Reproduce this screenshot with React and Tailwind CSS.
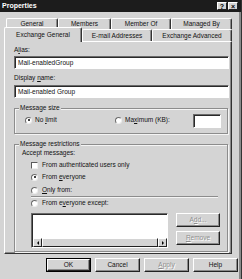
import React from 'react';

function TitleBtn({ children }) {
  return (
    <span className="w-[10px] h-[8px] bg-[#d4d4d4] border border-t-white border-l-white border-b-[#222] border-r-[#222] flex items-center justify-center text-black font-bold text-[7px] leading-none">
      {children}
    </span>
  );
}

function Tab({ w, children }) {
  return (
    <div
      className="h-full border-t border-l border-r border-t-white border-l-white border-r-[#333] rounded-t-[2px] flex items-center justify-center shadow-[inset_-1px_0_0_#8a8a8a]"
      style={{ width: w }}
    >
      {children}
    </div>
  );
}

function Radio({ checked }) {
  return (
    <span className="w-[7px] h-[7px] rounded-full bg-white border border-t-[#6a6a6a] border-l-[#6a6a6a] border-b-[#eee] border-r-[#eee] flex items-center justify-center shrink-0">
      {checked && <span className="w-[2px] h-[2px] rounded-full bg-black" />}
    </span>
  );
}

function Check() {
  return (
    <span className="w-[7px] h-[7px] bg-white border border-t-[#5a5a5a] border-l-[#5a5a5a] border-b-[#eee] border-r-[#eee] shrink-0" />
  );
}

function Field({ value }) {
  return (
    <div className="w-[215px] h-[13px] bg-white border border-t-[#6a6a6a] border-l-[#6a6a6a] border-b-white border-r-white shadow-[inset_1px_1px_0_#2a2a2a] flex items-center pl-[3px]">
      {value}
    </div>
  );
}

function Btn({ children, disabled, def, w = 45 }) {
  const inner = (
    <div
      className={`h-full bg-[#d4d4d4] border border-t-white border-l-white border-b-[#222] border-r-[#222] shadow-[inset_-1px_-1px_0_#8a8a8a] flex items-center justify-center ${disabled ? 'text-[#8e8e8e] [text-shadow:1px_1px_0_#fff]' : 'text-[#111]'}`}
    >
      {children}
    </div>
  );
  if (def) {
    return (
      <div className="h-[14px] border border-black" style={{ width: w }}>
        {inner}
      </div>
    );
  }
  return (
    <div className="h-[14px]" style={{ width: w }}>
      {inner}
    </div>
  );
}

const U = ({ children }) => <span className="underline underline-offset-[1px]">{children}</span>;

export default function App() {
  return (
    <div className="w-[242px] h-[279px] bg-[#d4d4d4] font-['Liberation_Sans',Arial,sans-serif] text-[6.5px] leading-[8px] text-[#111] overflow-hidden border-r border-r-[#333] shadow-[inset_-2px_0_0_#8a8a8a]">
      {/* title bar */}
      <div className="h-[12px] bg-[#1c1c1c] flex items-center justify-between pl-[2px] pr-[3px]">
        <span className="text-white font-bold text-[7px]">Properties</span>
        <div className="flex gap-[1px]">
          <TitleBtn>?</TitleBtn>
          <TitleBtn>×</TitleBtn>
        </div>
      </div>

      {/* tabs */}
      <div className="mt-[6px]">
        <div className="flex h-[11px] pl-[6px]">
          <Tab w={52}>General</Tab>
          <Tab w={53}>Members</Tab>
          <Tab w={60}>Member Of</Tab>
          <Tab w={61}>Managed By</Tab>
        </div>
        <div className="flex h-[12px] pl-[4px] items-end">
          <div className="relative z-10 w-[78px] h-[15px] -mb-[1px] bg-[#d4d4d4] border-t border-l border-r border-t-white border-l-white border-r-[#333] rounded-t-[2px] flex items-start justify-center pt-[3px] shadow-[inset_-1px_0_0_#8a8a8a]">
            Exchange General
          </div>
          <Tab w={70}>E-mail Addresses</Tab>
          <Tab w={80}>Exchange Advanced</Tab>
        </div>
      </div>

      {/* panel */}
      <div className="ml-[4px] w-[228px] h-[213px] border border-t-white border-l-white border-r-[#333] border-b-[#333] shadow-[inset_-1px_-1px_0_#8a8a8a] pl-[9px] pt-[4px]">
        <div className="h-[8px]">
          A<U>l</U>ias:
        </div>
        <div className="mt-[2px]">
          <Field value="Mail-enabledGroup" />
        </div>
        <div className="h-[8px] mt-[5px]">
          Display <U>n</U>ame:
        </div>
        <div className="mt-[3px]">
          <Field value="Mail-enabled Group" />
        </div>

        {/* message size */}
        <div className="relative mt-[10px] w-[214px] h-[26px] border border-[#8c8c8c] shadow-[inset_1px_1px_0_#f4f4f4,1px_1px_0_#f4f4f4] pt-[5px] pl-[10px]">
          <span className="absolute -top-[5px] left-[4px] bg-[#d4d4d4] px-[1px]">Message size</span>
          <div className="flex h-[14px]">
            <div className="flex items-center gap-[3px] h-[8px] mt-[2px] w-[90px]">
              <Radio checked />
              <span>
                No <U>l</U>imit
              </span>
            </div>
            <div className="flex items-center gap-[3px] h-[8px] mt-[2px] w-[78px]">
              <Radio />
              <span>
                Ma<U>x</U>imum (KB):
              </span>
            </div>
            <div className="w-[28px] h-[14px] bg-white border border-t-[#6a6a6a] border-l-[#6a6a6a] border-b-white border-r-white shadow-[inset_1px_1px_0_#2a2a2a]" />
          </div>
        </div>

        {/* message restrictions */}
        <div className="relative mt-[10px] w-[214px] h-[108px] border border-[#8c8c8c] shadow-[inset_1px_1px_0_#f4f4f4,1px_1px_0_#f4f4f4] pt-[4px]">
          <span className="absolute -top-[5px] left-[4px] bg-[#d4d4d4] px-[1px]">Message restrictions</span>
          <div className="h-[8px] pl-[7px]">Accept messages:</div>
          <div className="pl-[16px]">
            <div className="flex items-center gap-[4px] h-[8px] mt-[4px]">
              <Check />
              <span>From authenticated users only</span>
            </div>
            <div className="flex items-center gap-[4px] h-[8px] mt-[4px]">
              <Radio checked />
              <span>
                From <U>e</U>veryone
              </span>
            </div>
            <div className="flex items-center gap-[4px] h-[8px] mt-[5px]">
              <Radio />
              <span>
                <U>O</U>nly from:
              </span>
            </div>
            <div className="mt-[2px] w-[187px] h-[2px] border-t border-t-[#8c8c8c] border-b border-b-[#f4f4f4]" />
            <div className="flex items-center gap-[4px] h-[8px] mt-[1px]">
              <Radio />
              <span>
                From e<U>v</U>eryone except:
              </span>
            </div>
            <div className="flex mt-[6px]">
              <div className="w-[137px] h-[35px] bg-white border border-t-[#6a6a6a] border-l-[#6a6a6a] border-b-white border-r-white shadow-[inset_1px_1px_0_#2a2a2a] flex flex-col justify-end pl-[1px] pt-[1px]">
                <div className="flex h-[9px] bg-[#e6e6e6]">
                  <div className="w-[9px] h-[9px] bg-[#d4d4d4] border border-t-white border-l-white border-b-[#222] border-r-[#222] flex items-center justify-center">
                    <span className="w-0 h-0 border-y-[2px] border-y-transparent border-r-[2px] border-r-black" />
                  </div>
                  <div className="flex-1 h-[9px] bg-[#d4d4d4] border border-t-white border-l-white border-b-[#222] border-r-[#222]" />
                  <div className="w-[9px] h-[9px] bg-[#d4d4d4] border border-t-white border-l-white border-b-[#222] border-r-[#222] flex items-center justify-center">
                    <span className="w-0 h-0 border-y-[2px] border-y-transparent border-l-[2px] border-l-black" />
                  </div>
                </div>
              </div>
              <div className="ml-[8px] flex flex-col gap-[4px]">
                <Btn disabled w={44}>
                  A<U>d</U>d...
                </Btn>
                <Btn disabled w={44}>
                  <U>R</U>emove
                </Btn>
              </div>
            </div>
          </div>
        </div>
      </div>

      {/* buttons */}
      <div className="flex mt-[4px] pl-[46px] gap-[4px]">
        <Btn def>OK</Btn>
        <Btn>Cancel</Btn>
        <Btn disabled>
          <U>A</U>pply
        </Btn>
        <Btn>Help</Btn>
      </div>
    </div>
  );
}
